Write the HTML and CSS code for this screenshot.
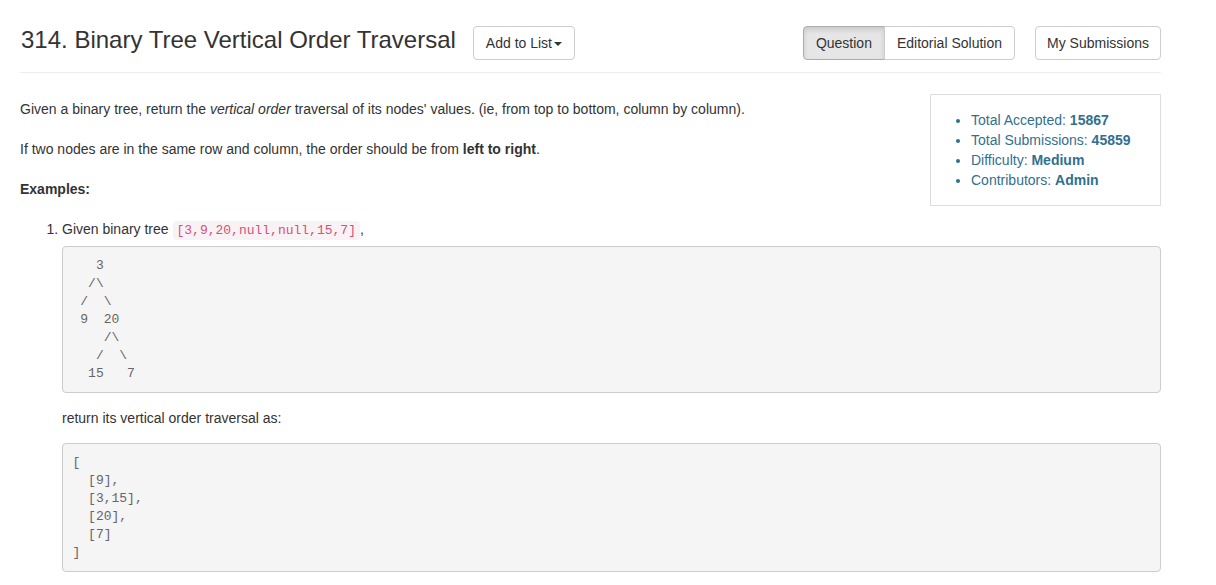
FILE: index.html
```html
<!DOCTYPE html>
<html lang="en">
<head>
<meta charset="utf-8">
<title>314. Binary Tree Vertical Order Traversal</title>
<link rel="stylesheet" href="styles.css">
</head>
<body>
<div class="container">
  <div class="header">
    <div class="header-left">
      <h3 class="title">314. Binary Tree Vertical Order Traversal</h3>
      <button class="btn">Add to List<span class="caret"></span></button>
    </div>
    <div class="header-right">
      <div class="btn-group">
        <button class="btn active">Question</button>
        <button class="btn">Editorial Solution</button>
      </div>
      <button class="btn btn-subs">My Submissions</button>
    </div>
  </div>

  <div class="content">
    <div class="stats">
      <ul>
        <li>Total Accepted: <strong>15867</strong></li>
        <li>Total Submissions: <strong>45859</strong></li>
        <li>Difficulty: <strong>Medium</strong></li>
        <li>Contributors: <strong>Admin</strong></li>
      </ul>
    </div>

    <div class="question">
      <p class="first">Given a binary tree, return the <em>vertical order</em> traversal of its nodes' values. (ie, from top to bottom, column by column).</p>
      <p>If two nodes are in the same row and column, the order should be from <b>left to right</b>.</p>
      <p><b>Examples:</b></p>
      <ol>
        <li>Given binary tree <code>[3,9,20,null,null,15,7]</code>,
<pre class="tree">   3
  /\
 /  \
 9  20
    /\
   /  \
  15   7</pre>
<p class="ret">return its vertical order traversal as:</p>
<pre class="result">[
  [9],
  [3,15],
  [20],
  [7]
]</pre>
        </li>
      </ol>
    </div>
  </div>
</div>
</body>
</html>
```

FILE: styles.css
```css
* { box-sizing: border-box; }

body {
  margin: 0;
  font-family: "Liberation Sans", Arial, Helvetica, sans-serif;
  font-size: 14px;
  line-height: 20px;
  color: #333;
  background: #fff;
}

.container {
  width: 1141px;
  margin-left: 20px;
}

.header {
  display: flex;
  justify-content: space-between;
  align-items: flex-start;
  padding-top: 26px;
  padding-bottom: 12px;
  border-bottom: 1px solid #eee;
}

.header-left {
  display: flex;
  align-items: flex-start;
  gap: 17px;
}

.header-right {
  display: flex;
  align-items: flex-start;
  gap: 20px;
}

.title {
  margin: 0 0 0 1px;
  font-size: 24px;
  line-height: 26.4px;
  font-weight: 500;
  color: #333;
  padding-top: 1px;
}

.btn {
  display: inline-block;
  padding: 6px 12px;
  font-family: inherit;
  font-size: 14px;
  line-height: 20px;
  color: #333;
  background: #fff;
  border: 1px solid #ccc;
  border-radius: 4px;
  white-space: nowrap;
  cursor: pointer;
}

.btn-subs {
  width: 126px;
  padding-left: 0;
  padding-right: 0;
  text-align: center;
}

.btn.active {
  background: #e6e6e6;
  border-color: #adadad;
  box-shadow: inset 0 3px 5px rgba(0, 0, 0, 0.125);
}

.caret {
  display: inline-block;
  width: 0;
  height: 0;
  margin-left: 2px;
  vertical-align: middle;
  border-top: 4px solid #333;
  border-left: 4px solid transparent;
  border-right: 4px solid transparent;
}

.btn-group {
  display: flex;
}

.btn-group .btn:first-child {
  border-top-right-radius: 0;
  border-bottom-right-radius: 0;
}

.btn-group .btn + .btn {
  margin-left: -1px;
  border-top-left-radius: 0;
  border-bottom-left-radius: 0;
}

.content {
  padding-top: 21px;
}

.stats {
  float: right;
  width: 231px;
  border: 1px solid #ddd;
  padding: 15px 0 15px;
  color: #31708f;
}

.stats ul {
  margin: 0;
  padding-left: 40px;
}

.stats li {
  line-height: 20px;
}

.question p {
  margin: 0 0 20px;
}

.question p.first {
  margin-top: 5px;
}

.question ol {
  margin: 0;
  padding-left: 42px;
}

code {
  font-family: "Liberation Mono", "Courier New", monospace;
  font-size: 13px;
  padding: 2px 4px;
  color: #d4517a;
  background: #f9f2f4;
  border-radius: 4px;
}

pre {
  font-family: "Liberation Mono", "Courier New", monospace;
  font-size: 13px;
  line-height: 18px;
  color: #666;
  background: #f5f5f5;
  border: 1px solid #ccc;
  border-radius: 4px;
  padding: 9.5px;
  margin: 0;
}

pre.tree {
  margin: 5px 0 15px;
}

.question p.ret {
  margin: 0 0 15px;
}
```
